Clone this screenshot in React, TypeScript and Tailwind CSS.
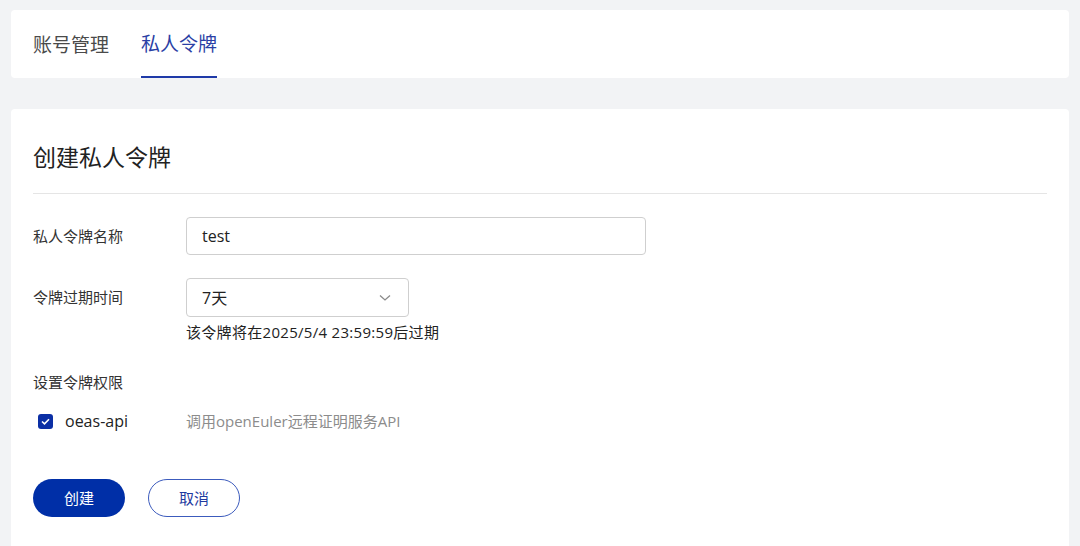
import React from "react";

const font = { fontFamily: '"Open Sans", "Noto Sans CJK SC", sans-serif' };

export default function App() {
  return (
    <div
      className="w-[1080px] h-[546px] overflow-hidden bg-[#f2f3f5] px-[11px] pt-[10px] flex flex-col gap-[31px] text-[#1f1f1f]"
      style={font}
    >
      <div className="h-[68px] bg-white rounded-[4px] px-[22px] flex items-end gap-[32px]">
        <div className="h-full flex items-center text-[19px] text-[#4a4a4a] pt-[2px]">账号管理</div>
        <div className="h-full flex flex-col">
          <div className="flex-1 flex items-center text-[19px] text-[#2b3fa5] pt-[2px]">私人令牌</div>
          <div className="h-[2px] bg-[#1f3aa8]" />
        </div>
      </div>

      <div className="flex-1 bg-white rounded-t-[4px] px-[22px]">
        <div className="h-[85px] flex items-center pt-[12px] text-[23px] text-[#222] border-b border-[#e5e5e5]">
          创建私人令牌
        </div>

        <div className="flex items-center mt-[23px]">
          <div className="w-[153px] text-[15px] text-[#333]">私人令牌名称</div>
          <div className="w-[460px] h-[38px] border border-[#cfcfcf] rounded-[4px] flex items-center px-[15px] text-[16px] text-[#222]">
            test
          </div>
        </div>

        <div className="flex items-start mt-[23px]">
          <div className="w-[153px] h-[38px] flex items-center text-[15px] text-[#333]">令牌过期时间</div>
          <div className="flex flex-col">
            <div className="w-[223px] h-[39px] border border-[#cfcfcf] rounded-[4px] flex items-center justify-between pl-[15px] pr-[17px] text-[16px] text-[#222]">
              <span>7天</span>
              <svg width="12" height="8" viewBox="0 0 12 8" fill="none">
                <path d="M1 1.5L6 6L11 1.5" stroke="#8a8a8a" strokeWidth="1.3" />
              </svg>
            </div>
            <div className="mt-[4px] text-[15px] text-[#222] tracking-[0.3px]">该令牌将在2025/5/4 23:59:59后过期</div>
          </div>
        </div>

        <div className="mt-[27px] text-[15px] text-[#333]">设置令牌权限</div>

        <div className="flex items-center mt-[16px]">
          <div className="w-[153px] flex items-center pl-[5px]">
            <div className="w-[15px] h-[15px] rounded-[3px] bg-[#0b2fa5] flex items-center justify-center">
              <svg width="9" height="7" viewBox="0 0 9 7" fill="none">
                <path d="M1 3.5L3.5 5.8L8 1.2" stroke="white" strokeWidth="1.6" />
              </svg>
            </div>
            <span className="ml-[12px] text-[16px] text-[#222]">oeas-api</span>
          </div>
          <div className="text-[15px] text-[#8c8c8c]">调用openEuler远程证明服务API</div>
        </div>

        <div className="flex items-center gap-[23px] mt-[46px]">
          <div className="w-[92px] h-[38px] rounded-full bg-[#002fa7] text-white text-[15px] flex items-center justify-center">
            创建
          </div>
          <div className="w-[92px] h-[38px] rounded-full border border-[#3c5bbd] text-[#1f3aa0] text-[15px] flex items-center justify-center">
            取消
          </div>
        </div>
      </div>
    </div>
  );
}
